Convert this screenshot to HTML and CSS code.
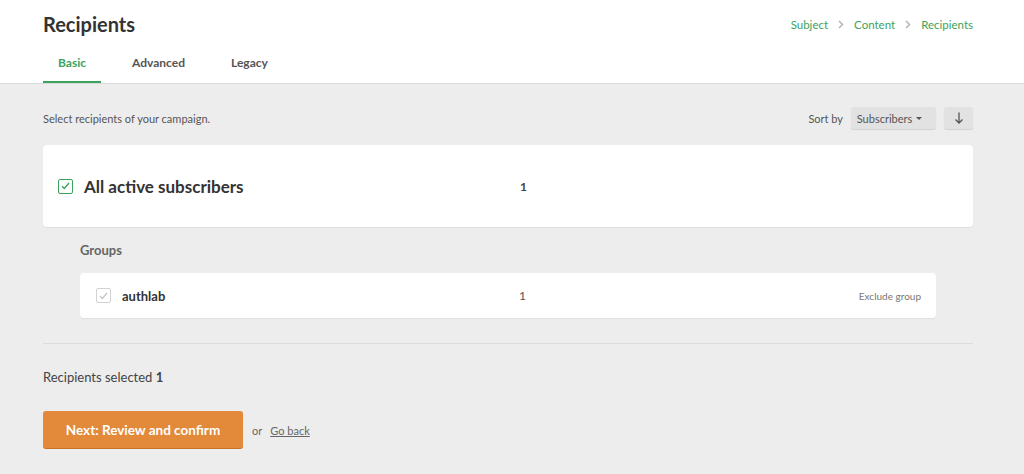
FILE: index.html
```html
<!DOCTYPE html>
<html lang="en">

<head>
  <meta charset="UTF-8">
  <meta name="viewport" content="width=device-width, initial-scale=1.0">
  <title>Recipients</title>
  <link rel="stylesheet" href="styles.css">
</head>

<body>

  <header class="page-header">
    <div class="header-top">
      <h1>Recipients</h1>
      <nav class="steps">
        <a href="#">Subject</a>
        <svg class="sep" width="6" height="9" viewBox="0 0 6 9"><path d="M1 1l3.5 3.5L1 8" fill="none" stroke="#b5b5b5" stroke-width="1.5"/></svg>
        <a href="#">Content</a>
        <svg class="sep" width="6" height="9" viewBox="0 0 6 9"><path d="M1 1l3.5 3.5L1 8" fill="none" stroke="#b5b5b5" stroke-width="1.5"/></svg>
        <a href="#">Recipients</a>
      </nav>
    </div>
    <div class="tabs">
      <a href="#" class="tab active">Basic</a>
      <a href="#" class="tab">Advanced</a>
      <a href="#" class="tab">Legacy</a>
    </div>
  </header>

  <main class="container">
    <div class="toolbar">
      <p class="hint">Select recipients of your campaign.</p>
      <div class="sort">
        <span>Sort by</span>
        <button class="btn-light btn-sort">Subscribers <span class="caret"></span></button>
        <button class="btn-light btn-icon">
          <svg width="10" height="12" viewBox="0 0 10 12"><path d="M5 0.5V11M1.5 7.5L5 11l3.5-3.5" fill="none" stroke="#555" stroke-width="1.3"/></svg>
        </button>
      </div>
    </div>

    <div class="card all-card">
      <span class="check green">
        <svg width="9" height="8" viewBox="0 0 9 8"><path d="M1 4.2l2.3 2.3L8 1" fill="none" stroke="#3ca35c" stroke-width="1.4"/></svg>
      </span>
      <span class="name">All active subscribers</span>
      <span class="count">1</span>
    </div>

    <div class="groups">
      <h3>Groups</h3>
      <div class="card group-card">
        <span class="check grey">
          <svg width="9" height="8" viewBox="0 0 9 8"><path d="M1 4.2l2.3 2.3L8 1" fill="none" stroke="#c4c4c4" stroke-width="1.2"/></svg>
        </span>
        <span class="name">authlab</span>
        <span class="count">1</span>
        <a href="#" class="exclude">Exclude group</a>
      </div>
    </div>

    <hr class="divider">

    <p class="selected">Recipients selected <strong>1</strong></p>

    <div class="actions">
      <button class="btn-primary">Next: Review and confirm</button>
      <span class="or">or</span>
      <a href="#" class="back">Go back</a>
    </div>
  </main>

</body>

</html>
```

FILE: styles.css
```css
body {
  font-family: 'Lato', sans-serif;
  margin: 0;
  padding: 0;
  background-color: #ededed;
  color: #333;
}

.page-header {
  background-color: white;
  border-bottom: 1px solid #dcdcdc;
  padding: 0 51px 0 43px;
}

.header-top {
  display: flex;
  justify-content: space-between;
  align-items: center;
  height: 48px;
}

.header-top h1 {
  margin: 0;
  font-size: 20px;
  font-weight: 700;
  color: #333;
}

.steps {
  font-size: 11.5px;
  display: flex;
  align-items: center;
  gap: 10px;
}

.steps a {
  color: #3ca35c;
  text-decoration: none;
}

.tabs {
  display: flex;
  gap: 16px;
  height: 35px;
}

.tab {
  display: block;
  text-decoration: none;
  color: #555;
  font-size: 12px;
  font-weight: 700;
  padding: 7px 15px 0;
  box-sizing: border-box;
}

.tab.active {
  color: #3ca35c;
  border-bottom: 2px solid #3ca35c;
}

.container {
  padding: 0 51px 0 43px;
}

.toolbar {
  display: flex;
  justify-content: space-between;
  align-items: center;
  height: 22px;
  padding: 23px 0 16px;
}

.hint {
  margin: 0;
  font-size: 11px;
  color: #555;
}

.sort {
  display: flex;
  align-items: center;
  font-size: 11px;
  color: #555;
}

.sort span:first-child {
  margin-right: 8px;
}

.btn-light {
  font-family: inherit;
  font-size: 11px;
  color: #555;
  background-color: #e2e2e2;
  border: none;
  border-radius: 3px;
  box-shadow: 0 1px 1px rgba(0, 0, 0, 0.12);
  height: 22px;
  padding: 0;
  display: flex;
  align-items: center;
  justify-content: center;
}

.btn-sort {
  width: 85px;
}

.btn-icon {
  margin-left: 8px;
  width: 29px;
}

.caret {
  display: inline-block;
  margin-left: 4px;
  border-left: 3px solid transparent;
  border-right: 3px solid transparent;
  border-top: 3px solid #555;
}

.card {
  background-color: white;
  border-radius: 4px;
  box-shadow: 0 1px 1px rgba(0, 0, 0, 0.06);
  display: flex;
  align-items: center;
}

.all-card {
  height: 82px;
  padding: 0 15px;
}

.check {
  width: 15px;
  height: 15px;
  box-sizing: border-box;
  border-radius: 2px;
  display: flex;
  align-items: center;
  justify-content: center;
  flex-shrink: 0;
}

.check.green {
  border: 1.5px solid #3ca35c;
}

.check.grey {
  border: 1px solid #d2d2d2;
}

.all-card .name {
  margin-left: 11px;
  font-size: 17px;
  font-weight: 700;
  width: 436px;
}

.count {
  font-size: 12px;
  font-weight: 700;
  color: #444;
}

.groups {
  padding: 0 37px;
}

.groups h3 {
  margin: 15px 0 15px;
  font-size: 13px;
  font-weight: 700;
  color: #666;
}

.group-card {
  height: 45px;
  padding: 0 15px 0 16px;
}

.group-card .name {
  margin-left: 11px;
  font-size: 13px;
  font-weight: 700;
  width: 397px;
}

.group-card .count {
  font-weight: 400;
  color: #555;
  flex: 1;
}

.exclude {
  font-size: 10px;
  color: #777;
  text-decoration: none;
}

.divider {
  border: none;
  border-top: 1px solid #dcdcdc;
  margin: 25px 0 0;
}

.selected {
  margin: 25px 0 0;
  font-size: 13px;
  color: #444;
}

.actions {
  display: flex;
  align-items: center;
  margin-top: 26px;
}

.btn-primary {
  font-family: inherit;
  background-color: #e2893a;
  color: white;
  font-size: 13.5px;
  font-weight: 700;
  border: none;
  border-bottom: 1px solid #c97424;
  border-radius: 3px;
  width: 200px;
  height: 38px;
}

.or {
  font-size: 11px;
  color: #666;
  margin: 0 8px 0 9px;
}

.back {
  font-size: 11px;
  color: #666;
}
```
